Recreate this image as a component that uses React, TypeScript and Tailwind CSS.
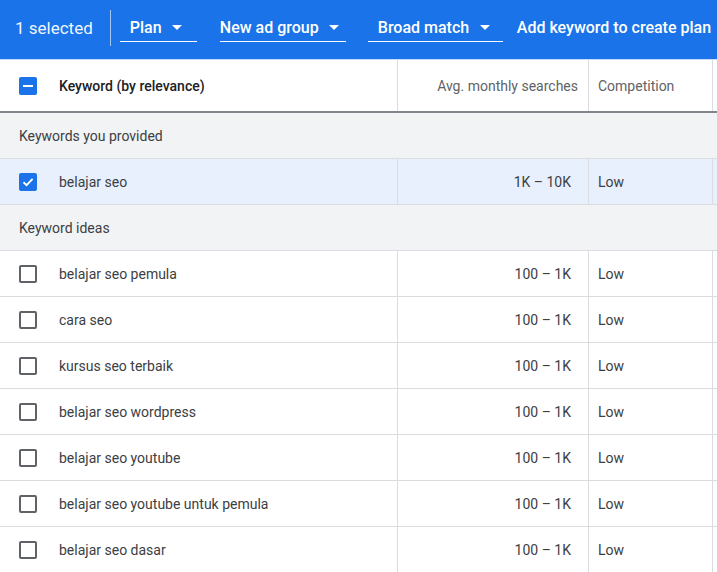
import React from "react";

const rows = [
  "belajar seo pemula",
  "cara seo",
  "kursus seo terbaik",
  "belajar seo wordpress",
  "belajar seo youtube",
  "belajar seo youtube untuk pemula",
  "belajar seo dasar",
];

function Caret() {
  return (
    <svg width="10" height="5" viewBox="0 0 10 5" className="shrink-0">
      <path d="M0 0 L10 0 L5 5 Z" fill="white" />
    </svg>
  );
}

function Checked() {
  return (
    <div className="w-[18px] h-[18px] rounded-[2px] bg-[#1a73e8] flex items-center justify-center">
      <svg width="14" height="14" viewBox="0 0 14 14">
        <path d="M2.5 7.2 L5.6 10.2 L11.6 3.8" stroke="white" strokeWidth="1.9" fill="none" />
      </svg>
    </div>
  );
}

function Indeterminate() {
  return (
    <div className="w-[18px] h-[18px] rounded-[2px] bg-[#1a73e8] flex items-center justify-center">
      <div className="w-[10px] h-[2px] bg-white" />
    </div>
  );
}

function Unchecked() {
  return <div className="w-[18px] h-[18px] rounded-[2px] border-2 border-[#5f6368]" />;
}

function DataRow({
  kw,
  searches,
  selected,
}: {
  kw: string;
  searches: string;
  selected?: boolean;
}) {
  return (
    <div
      className={`flex h-[46px] border-b border-[#dadce0] text-[14px] text-[#3c4043] ${
        selected ? "bg-[#e8f0fe]" : "bg-white"
      }`}
    >
      <div className="w-[398px] shrink-0 border-r border-[#dadce0] flex items-center pl-[19px]">
        <div className="mt-[1px]">{selected ? <Checked /> : <Unchecked />}</div>
        <span className="ml-[22px] pt-[2px]">{kw}</span>
      </div>
      <div className="w-[191px] shrink-0 border-r border-[#dadce0] flex items-center justify-end pr-[17px] pt-[2px]">
        {searches}
      </div>
      <div className="w-[124px] shrink-0 border-r border-[#dadce0] flex items-center pl-[9px] pt-[2px]">
        Low
      </div>
      <div className="flex-1" />
    </div>
  );
}

function SectionRow({ label }: { label: string }) {
  return (
    <div className="flex items-center h-[46px] border-b border-[#dadce0] bg-[#f1f3f4] pl-[19px] pt-[2px] text-[14px] text-[#3c4043]">
      {label}
    </div>
  );
}

export default function App() {
  return (
    <div
      className="w-[717px] h-[572px] overflow-hidden bg-white"
      style={{ fontFamily: "Roboto, 'Liberation Sans', sans-serif" }}
    >
      <div className="h-[60px] bg-[#1a73e8] border-b border-[#c6dafc] flex items-start text-white whitespace-nowrap">
        <span className="pl-[15px] mt-[18px] leading-[20px] text-[17px] text-white/95">1 selected</span>
        <div className="ml-[17px] mt-[10px] w-px h-[36px] bg-white/60" />
        <div className="ml-[9px] mt-[12px] w-[77px] h-[30px] border-b border-white flex items-center pl-[10px] pt-[2px] text-[16px] font-medium">
          <span>Plan</span>
          <span className="ml-[10px]"><Caret /></span>
        </div>
        <div className="ml-[23px] mt-[12px] w-[126px] h-[30px] border-b border-white flex items-center pt-[2px] text-[16px] font-medium">
          <span>New ad group</span>
          <span className="ml-[10px]"><Caret /></span>
        </div>
        <div className="ml-[22px] mt-[12px] w-[135px] h-[30px] border-b border-white flex items-center pl-[10px] pt-[2px] text-[16px] font-medium">
          <span>Broad match</span>
          <span className="ml-[11px]"><Caret /></span>
        </div>
        <span className="ml-[14px] mt-[18px] leading-[20px] text-[16px] font-medium">Add keyword to create plan</span>
      </div>
      <div className="flex h-[53px] border-b-2 border-[#80868b] bg-white text-[14px]">
        <div className="w-[398px] shrink-0 border-r border-[#dadce0] flex items-center pl-[19px]">
          <Indeterminate />
          <span className="ml-[22px] pt-[2px] font-medium text-[#202124]">Keyword (by relevance)</span>
        </div>
        <div className="w-[191px] shrink-0 border-r border-[#dadce0] flex items-center justify-end pr-[10px] pt-[2px] text-[#5f6368]">
          Avg. monthly searches
        </div>
        <div className="w-[124px] shrink-0 border-r border-[#dadce0] flex items-center pl-[9px] pt-[2px] text-[#5f6368]">
          Competition
        </div>
        <div className="flex-1" />
      </div>
      <SectionRow label="Keywords you provided" />
      <DataRow kw="belajar seo" searches="1K – 10K" selected />
      <SectionRow label="Keyword ideas" />
      {rows.map((r) => (
        <DataRow key={r} kw={r} searches="100 – 1K" />
      ))}
    </div>
  );
}
